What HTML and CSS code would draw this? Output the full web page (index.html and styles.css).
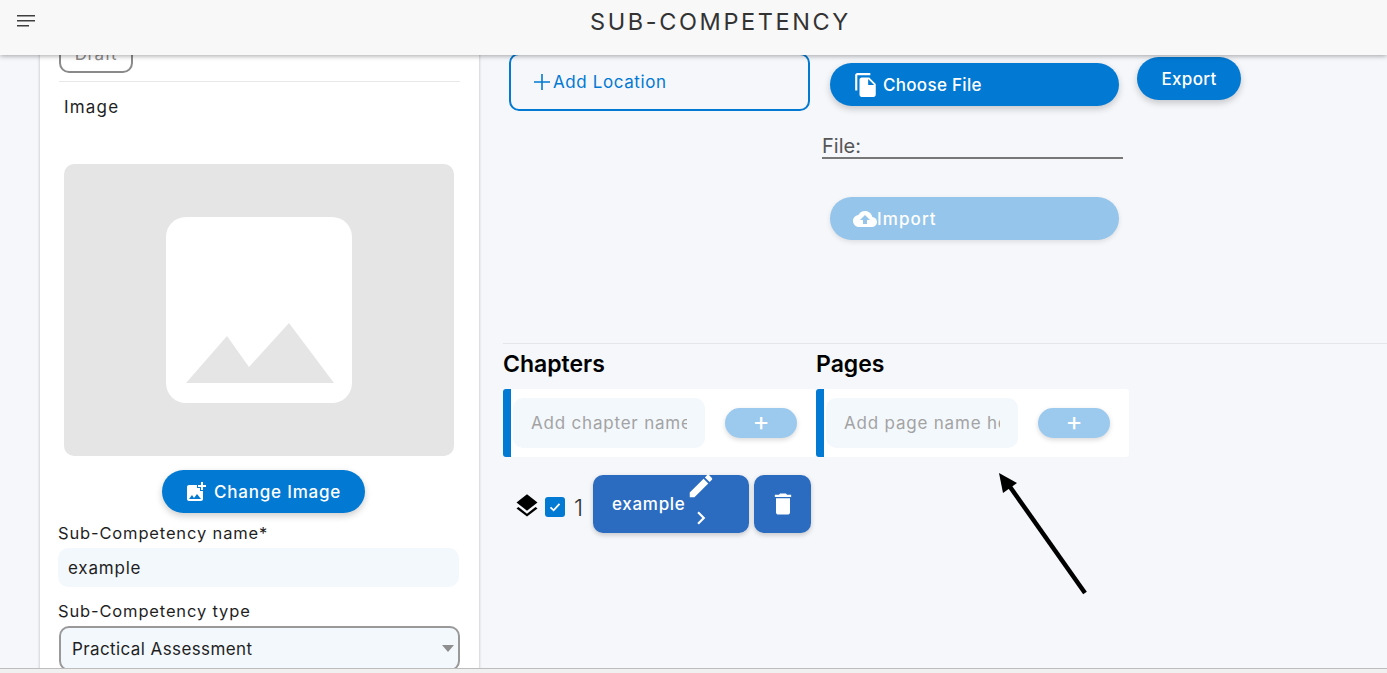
FILE: index.html
```html
<!DOCTYPE html>
<html lang="en">
<head>
<meta charset="UTF-8" />
<meta name="viewport" content="width=device-width, initial-scale=1.0"/>
<title>Sub-Competency</title>
<link rel="stylesheet" href="styles.css">
</head>
<body>
<header class="topbar">
  <svg class="menu-icon" width="18" height="12" viewBox="0 0 18 12"><path d="M0 0h18v1.6H0zM0 5h18v1.6H0zM0 10h12v1.6H0z"/></svg>
  <h1>SUB-COMPETENCY</h1>
</header>

<main class="layout">
  <aside class="side-card">
    <div class="status-pill">Draft</div>
    <hr class="side-rule">
    <div class="image-label">Image</div>
    <div class="image-box">
      <div class="image-blank">
        <svg width="148" height="60" viewBox="0 0 148 60"><path d="M0 60 41 13 63 44 103 0 148 60z"/></svg>
      </div>
    </div>
    <button class="pill change-btn">
      <svg width="24" height="24" viewBox="0 0 24 24"><path d="M19 7v2.99s-1.99.01-2 0V7h-3s.01-1.99 0-2h3V2h2v3h3v2h-3zm-3 4V8h-3V5H5c-1.1 0-2 .9-2 2v12c0 1.100.9 2 2 2h12c1.100 0 2-.9 2-2v-8h-3zM5 19l3-4 2 3 3-4 4 5H5z"/></svg>
      Change Image
    </button>
    <label class="field-label name-label">Sub-Competency name*</label>
    <input class="text-field" type="text" value="example">
    <label class="field-label type-label">Sub-Competency type</label>
    <div class="select-wrap">
      <select class="select-field"><option>Practical Assessment</option></select>
    </div>
  </aside>

  <section class="content">
    <div class="top-row">
      <button class="add-location">
        <svg width="18" height="18" viewBox="0 0 18 18"><path d="M8.200 1h1.600v7.200H17v1.600H9.800V17H8.200V9.800H1V8.200h7.200z"/></svg>
        Add Location
      </button>
      <div class="file-col">
        <button class="pill file-btn">
          <svg width="26" height="26" viewBox="0 0 24 24"><path d="M16 1H4c-1.100 0-2 .9-2 2v14h2V3h12V1zm-1 4l6 6v10c0 1.100-.9 2-2 2H7.990C6.890 23 6 22.100 6 21l.01-14c0-1.100.89-2 1.990-2h7zm-1 7h5.500L14 6.500V12z"/></svg>
          Choose File
        </button>
        <div class="file-name">File:</div>
        <button class="pill file-btn import-btn">
          <svg width="24" height="24" viewBox="0 0 24 24"><path d="M19.350 10.040C18.670 6.590 15.640 4 12 4 9.110 4 6.600 5.640 5.350 8.040 2.340 8.360 0 10.910 0 14c0 3.310 2.690 6 6 6h13c2.760 0 5-2.240 5-5 0-2.640-2.050-4.780-4.650-4.960zM14 13v4h-4v-4H7l5-5 5 5h-3z"/></svg>
          Import
        </button>
      </div>
      <button class="pill export-btn">Export</button>
    </div>

    <hr class="content-rule">

    <div class="columns">
      <div class="column">
        <h2>Chapters</h2>
        <div class="add-panel">
          <input class="add-input" type="text" placeholder="Add chapter name here">
          <button class="add-btn">+</button>
        </div>
        <div class="chapter-row">
          <svg class="layers" width="28" height="28" viewBox="0 0 24 24"><path d="M11.990 18.540l-7.370-5.730L3 14.070l9 7 9-7-1.630-1.270-7.380 5.740zM12 16l7.360-5.730L21 9l-9-7-9 7 1.630 1.270L12 16z"/></svg>
          <span class="check">
            <svg width="14" height="14" viewBox="0 0 14 14"><path d="M2.500 7.300 5.600 10.300 11.500 3.900" fill="none" stroke="#fff" stroke-width="1.800"/></svg>
          </span>
          <span class="chapter-num">1</span>
          <button class="item-btn chapter-btn">
            <span>example</span>
            <span class="item-icons">
              <svg class="pencil" width="30" height="30" viewBox="0 0 24 24"><path d="M3 17.250V21h3.750L17.810 9.940l-3.750-3.750L3 17.250zM20.710 7.040c.39-.39.39-1.020 0-1.410l-2.340-2.340c-.39-.39-1.020-.39-1.410 0l-1.830 1.830 3.750 3.750 1.830-1.830z"/></svg>
              <svg width="26" height="26" viewBox="0 0 24 24"><path d="M10 6L8.590 7.410 13.170 12l-4.580 4.590L10 18l6-6z"/></svg>
            </span>
          </button>
          <button class="item-btn delete-btn">
            <svg width="28" height="28" viewBox="0 0 24 24"><path d="M6 19c0 1.100.9 2 2 2h8c1.100 0 2-.9 2-2V7H6v12zM19 4h-3.500l-1-1h-5l-1 1H5v2h14V4z"/></svg>
          </button>
        </div>
      </div>
      <div class="column">
        <h2>Pages</h2>
        <div class="add-panel">
          <input class="add-input" type="text" placeholder="Add page name here">
          <button class="add-btn">+</button>
        </div>
      </div>
    </div>
  </section>
</main>

<svg class="annotation" width="100" height="130" viewBox="0 0 100 130">
  <path d="M90 124 13 15" fill="none" stroke="#000" stroke-width="4.500"/>
  <path d="M4 4 22 14 8 24z" fill="#000"/>
</svg>

<div class="bottom-strip"></div>
</body>
</html>
```

FILE: styles.css
```css
* {
  box-sizing: border-box;
}

html, body {
  height: 100%;
}

body {
  margin: 0;
  height: 673px;
  overflow: hidden;
  position: relative;
  background: #f5f7fb;
  color: #1f1f1f;
  font-family: Inter, "Liberation Sans", sans-serif;
  font-size: 16px;
}

button {
  font-family: inherit;
  border: none;
  cursor: pointer;
}

/* header sits over the scrolled page */
.topbar {
  position: absolute;
  top: 0;
  left: 0;
  right: 0;
  height: 55px;
  z-index: 5;
  background: #f8f8f8;
  box-shadow: 0 1px 5px rgba(0, 0, 0, 0.35);
  display: flex;
  align-items: center;
  justify-content: center;
}

.menu-icon {
  position: absolute;
  left: 17px;
  top: 15px;
  fill: #3f3f3f;
}

.topbar h1 {
  margin: 0 0 13px 54px;
  font-size: 23.500px;
  font-weight: 400;
  letter-spacing: 2.600px;
  color: #333;
}

.layout {
  display: flex;
  height: 673px;
  align-items: flex-start;
}

.side-card {
  width: 439px;
  height: 673px;
  margin-left: 40px;
  padding: 38px 19px 0 18px;
  background: #fff;
  box-shadow: 0 0 3px rgba(0, 0, 0, 0.25);
  flex-shrink: 0;
}

.status-pill {
  width: 74px;
  height: 35px;
  margin-left: 1px;
  border: 2px solid #8a8a8a;
  border-radius: 10px;
  color: #8a8a8a;
  font-size: 17px;
  letter-spacing: 0.6px;
  text-align: center;
  line-height: 29px;
}

.side-rule {
  margin: 8px 0 0 1px;
  border: none;
  border-top: 1px solid #e8e8e8;
}

.image-label {
  margin: 15px 0 0 6px;
  line-height: 20px;
  font-size: 17px;
  letter-spacing: 1.200px;
}

.image-box {
  width: 390px;
  height: 292px;
  margin: 47px 0 0 6px;
  background: #e5e5e5;
  border-radius: 10px;
  display: flex;
  align-items: center;
  justify-content: center;
}

.image-blank {
  width: 186px;
  height: 186px;
  background: #fff;
  border-radius: 20px;
  display: flex;
  align-items: flex-end;
  justify-content: center;
  padding: 0 0 20px 2px;
}

.image-blank svg {
  fill: #e5e5e5;
}

.pill {
  display: flex;
  align-items: center;
  background: #0279d2;
  color: #fff;
  border-radius: 22px;
  font-size: 17px;
  font-weight: 500;
  letter-spacing: 0.3px;
  box-shadow: 0 3px 7px rgba(0, 0, 0, 0.2);
}

.pill svg {
  fill: #fff;
  flex-shrink: 0;
}

.change-btn {
  width: 203px;
  height: 43px;
  margin: 14px 0 0 104px;
  padding: 0 0 0 22px;
  gap: 6px;
  letter-spacing: 0.8px;
}

.field-label {
  display: block;
  font-size: 16.500px;
  line-height: 20px;
  letter-spacing: 0.850px;
}

.name-label {
  margin-top: 10px;
}

.type-label {
  margin-top: 14px;
}

.text-field {
  display: block;
  width: 401px;
  height: 39px;
  margin-top: 5px;
  padding: 0 10px;
  border: none;
  border-radius: 10px;
  background: #f3f8fd;
  font-family: inherit;
  font-size: 17px;
  letter-spacing: 0.800px;
  color: #1f1f1f;
}

.select-wrap {
  position: relative;
  margin: 5px 0 0 1px;
  width: 401px;
}

.select-wrap::after {
  content: "";
  position: absolute;
  right: 6px;
  top: 19px;
  border-left: 6px solid transparent;
  border-right: 6px solid transparent;
  border-top: 7px solid #8f8f8f;
}

.select-field {
  appearance: none;
  width: 100%;
  height: 45px;
  padding: 0 11px;
  border: 2px solid #999;
  border-radius: 10px;
  background: #f3f8fd;
  font-family: inherit;
  font-size: 17px;
  letter-spacing: 0.4px;
  color: #1f1f1f;
}

.content {
  flex: 1;
  margin-left: 24px;
  padding-top: 53px;
}

.top-row {
  display: flex;
  align-items: flex-start;
  height: 290px;
}

.add-location {
  width: 301px;
  height: 58px;
  margin-left: 6px;
  padding: 0 0 0 22px;
  display: flex;
  align-items: center;
  gap: 2px;
  background: transparent;
  border: 2px solid #0279d2;
  border-radius: 10px;
  color: #0279d2;
  font-size: 17px;
  letter-spacing: 0.6px;
}

.add-location svg {
  fill: #0279d2;
}

.file-col {
  width: 301px;
  margin-left: 12px;
  padding-top: 10px;
}

.file-btn {
  width: 289px;
  height: 43px;
  margin-left: 8px;
  padding: 0 0 0 23px;
  gap: 4px;
}

.file-name {
  height: 31px;
  margin-top: 22px;
  border-bottom: 2px solid #777;
  font-size: 20px;
  line-height: 37px;
  color: #555;
}

.import-btn {
  margin-top: 38px;
  background: #95c5ea;
  gap: 0;
  letter-spacing: 1.100px;
  box-shadow: 0 2px 5px rgba(0, 0, 0, 0.1);
}

.export-btn {
  width: 104px;
  height: 43px;
  margin: 4px 0 0 14px;
  justify-content: center;
}

.content-rule {
  margin: 0;
  border: none;
  border-top: 1px solid #e4e6ea;
}

.columns {
  display: flex;
}

.column {
  width: 313px;
}

.column h2 {
  margin: 6px 0 0 0;
  font-size: 23px;
  font-weight: 600;
  line-height: 28px;
  color: #000;
}

.add-panel {
  height: 68px;
  margin-top: 11px;
  padding: 9px 19px 0 2px;
  display: flex;
  align-items: flex-start;
  background: #fff;
  border-left: 8px solid #0279d2;
  border-radius: 3px;
}

.add-input {
  width: 192px;
  height: 50px;
  padding: 0 18px;
  border: none;
  border-radius: 10px;
  background: #f3f8fd;
  font-family: inherit;
  font-size: 17px;
  letter-spacing: 0.8px;
}

.add-input::placeholder {
  color: #a3a3a3;
  opacity: 1;
}

.add-btn {
  width: 72px;
  height: 30px;
  margin: 10px 0 0 20px;
  padding: 0 0 4px 0;
  border-radius: 15px;
  background: #9bcaee;
  color: #fff;
  font-size: 26px;
  line-height: 26px;
  box-shadow: 0 2px 5px rgba(0, 0, 0, 0.15);
}

.chapter-row {
  display: flex;
  align-items: center;
  margin-top: 18px;
  width: 320px;
}

.layers {
  margin: 4px 0 0 10px;
  fill: #000;
}

.check {
  width: 20px;
  height: 20px;
  margin: 5px 0 0 4px;
  display: flex;
  align-items: center;
  justify-content: center;
  background: #0279d2;
  border-radius: 3px;
}

.chapter-num {
  width: 28px;
  padding: 7px 0 0 9px;
  font-size: 23px;
  font-weight: 300;
  color: #333;
}

.item-btn {
  height: 58px;
  background: #2b6cc0;
  color: #fff;
  border-radius: 10px;
  font-size: 17px;
  box-shadow: 0 2px 5px rgba(0, 0, 0, 0.2);
}

.item-btn svg {
  fill: #fff;
}

.chapter-btn {
  width: 156px;
  display: flex;
  align-items: center;
  padding: 0 0 0 19px;
  gap: 0;
  font-weight: 500;
  letter-spacing: 0.7px;
}

.item-icons {
  width: 30px;
  height: 58px;
  display: flex;
  flex-direction: column;
  align-items: center;
  justify-content: space-between;
  padding-bottom: 2px;
}

.pencil {
  margin-top: -4px;
}

.delete-btn {
  width: 57px;
  margin-left: 5px;
  padding: 0;
  display: flex;
  align-items: center;
  justify-content: center;
}

/* annotation arrow drawn on top of the screenshot */
.annotation {
  position: absolute;
  left: 995px;
  top: 469px;
}

.bottom-strip {
  position: absolute;
  left: 0;
  right: 0;
  bottom: 0;
  height: 5px;
  background: #f0f0f0;
  border-top: 1px solid #bdbdbd;
}
```
